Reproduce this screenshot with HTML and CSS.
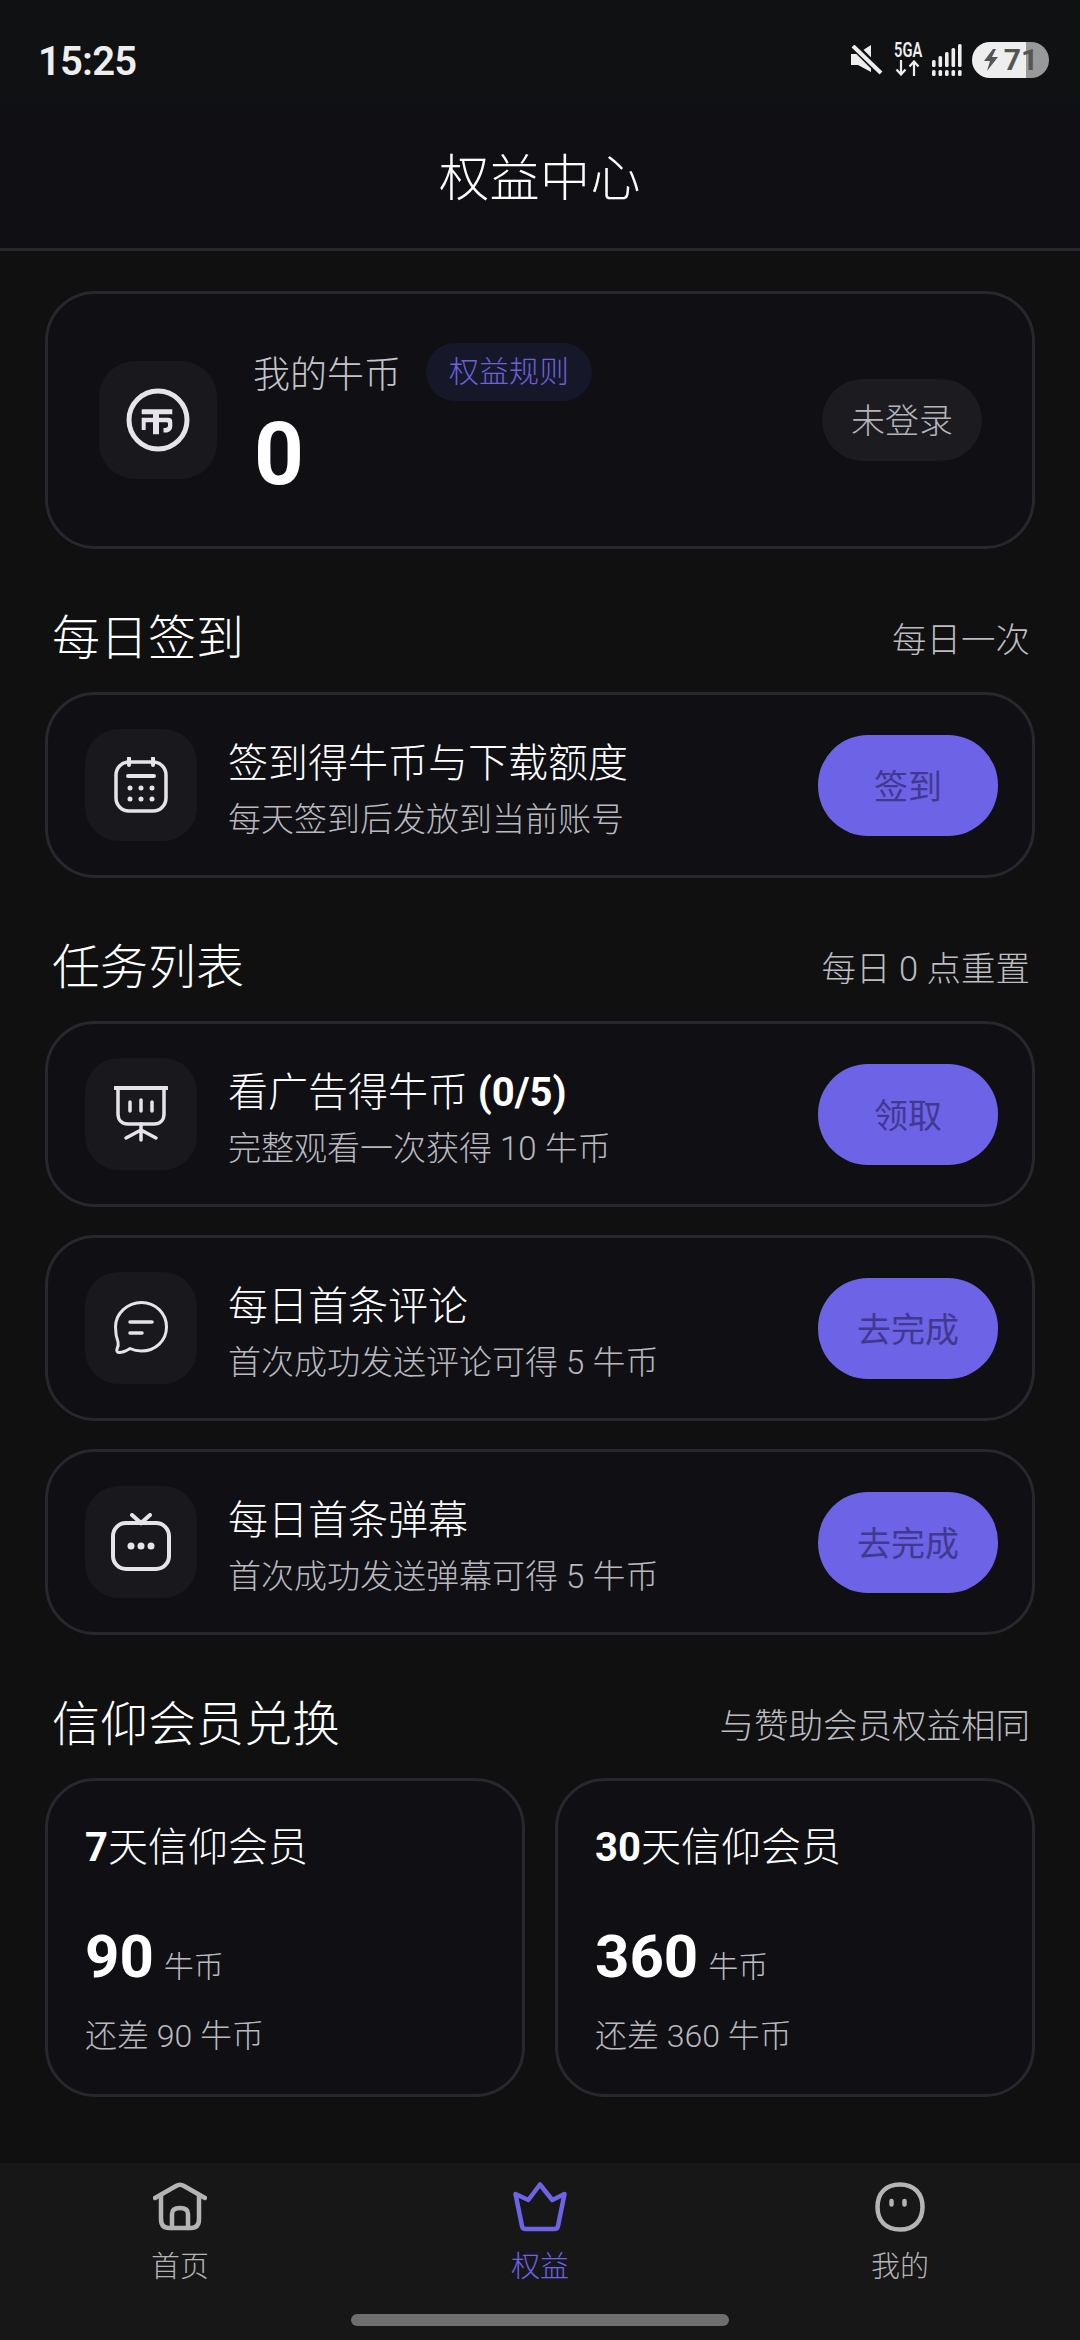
FILE: index.html
```html
<!DOCTYPE html>
<html lang="zh-CN">
<head>
<meta charset="utf-8">
<title>权益中心</title>
<link rel="stylesheet" href="styles.css">
</head>
<body>
<div class="app">
  <div class="status">
    <span class="time">15:25</span>
    <div class="status-icons">
      <svg class="ic-mute" width="33" height="30" viewBox="0 0 33 30"><path d="M1 9h6L21 0v27L8 20H1z" fill="#eee"/><path d="M3 0l28 28" stroke="#101112" stroke-width="8"/><path d="M3 1l28 27" stroke="#eee" stroke-width="4"/></svg>
      <div class="net"><span class="net-t">5GA</span><svg width="26" height="16" viewBox="0 0 26 16"><path d="M6 0v14M1.500 9.500L6 14.500l4.500-5M19 16V2M14.500 6.500L19 1.500l4.500 5" fill="none" stroke="#eee" stroke-width="2.200"/></svg></div>
      <svg class="ic-sig" width="31" height="32" viewBox="0 0 31 32" fill="#eee"><rect x="0" y="16" width="3.600" height="7" rx="1.500"/><rect x="6.500" y="12" width="3.600" height="11" rx="1.500"/><rect x="13" y="8" width="3.600" height="15" rx="1.500"/><rect x="19.500" y="4" width="3.600" height="19" rx="1.500"/><rect x="26" y="0" width="3.600" height="23" rx="1.500"/><rect x="0" y="26" width="3.600" height="6" rx="1.500"/><rect x="6.500" y="26" width="3.600" height="6" rx="1.500"/><rect x="13" y="26" width="3.600" height="6" rx="1.500"/><rect x="19.500" y="26" width="3.600" height="6" rx="1.500"/><rect x="26" y="26" width="3.600" height="6" rx="1.500"/></svg>
      <div class="batt"><svg width="17" height="22" viewBox="0 0 17 22"><path d="M10 0L1 12h6l-3 10 11-14H9l4-8z" fill="#555"/></svg><span class="batt-t">71</span></div>
    </div>
  </div>
  <header class="bar"><h1>权益中心</h1></header>
  <main class="main">
    <section class="card balance">
      <div class="tile tile-lg">
        <svg width="66" height="66" viewBox="0 0 66 66"><circle cx="33" cy="33" r="29" fill="none" stroke="#e6e3ea" stroke-width="5"/><path d="M16.700 22.300H47.300V27.300H34V30.700H43C46 30.700 47.300 32 47.300 35V39C47.300 43 44.500 45.500 40.700 45.500H38.500V41H40C42 41 43 40 43 38.500V37C43 35.800 42.500 35.300 41.500 35.300H34V47.300H28V35.300H20.700V43H16.700V30.700H28V27.300H16.700z" fill="#e6e3ea"/></svg>
      </div>
      <div class="bal-info">
        <div class="bal-top"><span class="bal-label">我的牛币</span><span class="rule">权益规则</span></div>
        <div class="bal-num">0</div>
      </div>
      <span class="login">未登录</span>
    </section>

    <div class="sec-head"><h2>每日签到</h2><span>每日一次</span></div>
    <section class="card task">
      <div class="tile">
        <svg width="54" height="56" viewBox="0 0 54 56" fill="none" stroke="#e6e3ea" stroke-width="3.500" stroke-linecap="round"><rect x="2" y="5" width="50" height="49" rx="13"/><path d="M15 1v7M39 1v7M14 19h26" stroke-width="4"/><g fill="#e6e3ea" stroke="none"><circle cx="16" cy="31" r="2.500"/><circle cx="27" cy="31" r="2.500"/><circle cx="38" cy="31" r="2.500"/><circle cx="16" cy="42" r="2.500"/><circle cx="27" cy="42" r="2.500"/><circle cx="38" cy="42" r="2.500"/></g></svg>
      </div>
      <div class="task-info"><div class="task-title">签到得牛币与下载额度</div><div class="task-sub">每天签到后发放到当前账号</div></div>
      <span class="btn">签到</span>
    </section>

    <div class="sec-head"><h2>任务列表</h2><span>每日 0 点重置</span></div>
    <div class="tasks">
      <section class="card task">
        <div class="tile">
          <svg width="54" height="56" viewBox="0 0 54 56" fill="none" stroke="#e6e3ea" stroke-width="3.500" stroke-linecap="round"><path d="M1 2h52" stroke-width="4"/><path d="M4 2v26c0 6 4 10 10 10h26c6 0 10-4 10-10V2"/><path d="M16 16v9M27 14v11M38 16v9M27 38v16M27 44L12 52M27 44l15 8"/></svg>
        </div>
        <div class="task-info"><div class="task-title">看广告得牛币 <b>(0/5)</b></div><div class="task-sub">完整观看一次获得 10 牛币</div></div>
        <span class="btn">领取</span>
      </section>
      <section class="card task">
        <div class="tile">
          <svg width="54" height="54" viewBox="0 0 54 54" fill="none" stroke="#e6e3ea" stroke-width="3" stroke-linecap="round" stroke-linejoin="round"><path d="M27.500 1.500c14 0 25 11 25 24.500S41.500 50 27.500 50c-4 0-8-.8-11.500-2.500-3 2-7 4-11 4-2 0-2.500-2-2-3.500 1-2 1.500-5 1-7C2.500 37 1.500 31.500 1.500 26 1.500 12.500 13.500 1.500 27.500 1.500z"/><path d="M16 21h22M16 32h12" stroke-width="3.500"/></svg>
        </div>
        <div class="task-info"><div class="task-title">每日首条评论</div><div class="task-sub">首次成功发送评论可得 5 牛币</div></div>
        <span class="btn">去完成</span>
      </section>
      <section class="card task">
        <div class="tile">
          <svg width="60" height="58" viewBox="0 0 60 58" fill="none" stroke="#e6e3ea" stroke-width="4" stroke-linecap="round"><rect x="2" y="10" width="56" height="46" rx="13"/><path d="M21 2l9 8 9-8"/><g fill="#e6e3ea" stroke="none"><circle cx="20" cy="33" r="3.500"/><circle cx="30" cy="33" r="3.500"/><circle cx="40" cy="33" r="3.500"/></g></svg>
        </div>
        <div class="task-info"><div class="task-title">每日首条弹幕</div><div class="task-sub">首次成功发送弹幕可得 5 牛币</div></div>
        <span class="btn">去完成</span>
      </section>
    </div>

    <div class="sec-head"><h2>信仰会员兑换</h2><span>与赞助会员权益相同</span></div>
    <div class="plans">
      <section class="card plan">
        <div class="plan-name"><b>7</b>天信仰会员</div>
        <div class="plan-price"><b>90</b><span>牛币</span></div>
        <div class="plan-gap">还差 90 牛币</div>
      </section>
      <section class="card plan">
        <div class="plan-name"><b>30</b>天信仰会员</div>
        <div class="plan-price"><b>360</b><span>牛币</span></div>
        <div class="plan-gap">还差 360 牛币</div>
      </section>
    </div>
  </main>
  <nav class="nav">
    <div class="tab">
      <svg width="54" height="50" viewBox="0 0 54 50" fill="none" stroke="#b4b4b4" stroke-width="4.500" stroke-linecap="round" stroke-linejoin="round"><path d="M2 16L23 4c2.500-1.500 5.500-1.500 8 0l21 12"/><path d="M8 13v24c0 6 3 9 8 9h22c5 0 8-3 8-9V13"/><path d="M19 46V32c0-4 3-6 8-6s8 2 8 6v14"/></svg>
      <span>首页</span>
    </div>
    <div class="tab active">
      <svg width="54" height="50" viewBox="0 0 54 50" fill="none" stroke="#6c63e6" stroke-width="4.500" stroke-linejoin="round"><path d="M2.500 12L15.300 18 27 2.500 39.300 18 51.500 12 45 44c-.4 2-1.500 3-3.500 3H12.500c-2 0-3.100-1-3.500-3z"/></svg>
      <span>权益</span>
    </div>
    <div class="tab">
      <svg width="50" height="50" viewBox="0 0 50 50" fill="none" stroke="#b4b4b4" stroke-width="4.500" stroke-linecap="round"><path d="M25 2.500c14 0 22.500 9 22.500 22.500S39 47.500 25 47.500 2.500 39 2.500 25 11 2.500 25 2.500z"/><path d="M16.500 19v3.500M29.500 19v3.500" stroke-width="4.500"/></svg>
      <span>我的</span>
    </div>
    <div class="home-bar"></div>
  </nav>
</div>
</body>
</html>
```

FILE: styles.css
```css
* { box-sizing: border-box; margin: 0; padding: 0; }
html, body { width: 1080px; height: 2340px; overflow: hidden; background: #101010; }
body { font-family: Roboto, "Noto Sans CJK SC", sans-serif; color: #fff; font-weight: 300; }
.app { width: 1080px; height: 2340px; display: flex; flex-direction: column; background: #101010; }
b { font-weight: 700; }

.status { height: 105px; flex: none; background: #101112; display: flex; justify-content: space-between; align-items: center; padding: 16px 31px 0 38px; }
.time { font-size: 40px; font-weight: 600; color: #eee; line-height: 1; margin-top: 2px; letter-spacing: -.8px; }
.status-icons { display: flex; align-items: center; gap: 9px; margin-top: -2px; }
.net { width: 28px; display: flex; flex-direction: column; align-items: center; gap: 2px; margin: 0 1px 0 2px; }
.net-t { font-size: 21px; line-height: 15px; font-weight: 600; color: #eee; transform: scaleX(.7); white-space: nowrap; }
.batt { width: 77px; height: 36px; border-radius: 18px; background: linear-gradient(90deg, #eee 54px, #999 54px); display: flex; align-items: center; justify-content: center; gap: 4px; }
.batt-t { font-size: 30px; font-weight: 700; line-height: 1; color: #555; }

.bar { height: 146px; flex: none; background: #0f0f14; border-bottom: 3px solid #27272d; display: flex; align-items: center; justify-content: center; }
.bar h1 { font-size: 50px; font-weight: 300; line-height: 1; margin-top: 4px; letter-spacing: .5px; }

.main { flex: 1; padding: 40px 45px 0; display: flex; flex-direction: column; }
.card { background: #0f0f14; border: 3px solid #27272d; border-radius: 50px; }

.balance { height: 258px; display: flex; align-items: center; padding: 0 50px 0 51px; }
.tile { width: 112px; height: 112px; flex: none; border-radius: 34px; background: #18181d; display: flex; align-items: center; justify-content: center; }
.tile-lg { width: 118px; height: 118px; border-radius: 36px; }
.bal-info { flex: 1; margin-left: 37px; padding-top: 16px; }
.bal-top { display: flex; align-items: center; gap: 25px; margin-top: -14px; }
.bal-label { font-size: 37px; color: #c4c4ca; margin-left: -1px; }
.rule { height: 58px; padding: 0 23px; border-radius: 29px; background: #17172a; color: #6a62d8; font-size: 30px; line-height: 58px; }
.bal-num { font-size: 87px; font-weight: 700; line-height: 90px; margin-top: 8px; }
.login { height: 82px; width: 160px; border-radius: 41px; background: #1b1b20; color: #b4b4ba; font-size: 34px; line-height: 84px; text-align: center; }

.sec-head { display: flex; justify-content: space-between; align-items: center; height: 48px; margin: 66px 5px 29px 7px; }
.sec-head h2 { font-size: 48px; font-weight: 300; line-height: 48px; }
.sec-head span { font-size: 34.500px; color: #bcbcc2; margin-top: -5px; }

.tasks { display: flex; flex-direction: column; gap: 28px; }
.task { height: 186px; display: flex; align-items: center; padding: 0 34px 0 37px; }
.task-info { flex: 1; margin-left: 31px; padding-top: 10px; }
.task-title { font-size: 40px; line-height: 52px; color: #fff; }
.task-title b { font-size: 40px; font-weight: 700; }
.task-sub { font-size: 33px; line-height: 44px; color: #b8b8be; margin-top: 8px; }
.btn { width: 180px; height: 101px; border-radius: 50px; background: #6c63e6; color: #3f3a8f; font-size: 34px; font-weight: 400; line-height: 105px; text-align: center; flex: none; }

.plans { display: grid; grid-template-columns: 480px 480px; gap: 30px; }
.plan { height: 319px; padding: 39px 37px 0; }
.plan-name { font-size: 40px; line-height: 56px; }
.plan-price { display: flex; align-items: baseline; gap: 10px; margin-top: 45px; line-height: 72px; }
.plan-price b { font-size: 60px; }
.plan-price span { font-size: 30px; color: #bcbcc2; }
.plan-gap { font-size: 32px; color: #b8b8be; line-height: 44px; margin-top: 11px; }

.nav { height: 177px; flex: none; background: #171717; position: relative; display: grid; grid-template-columns: repeat(3, 1fr); padding-top: 19px; align-items: start; }
.tab { display: flex; flex-direction: column; align-items: center; gap: 14px; color: #b4b4b4; font-size: 29px; line-height: 42px; }
.tab.active { color: #6c63e6; }
.home-bar { position: absolute; left: 351px; top: 151px; width: 378px; height: 12px; border-radius: 6px; background: #6e6e6e; }
```
